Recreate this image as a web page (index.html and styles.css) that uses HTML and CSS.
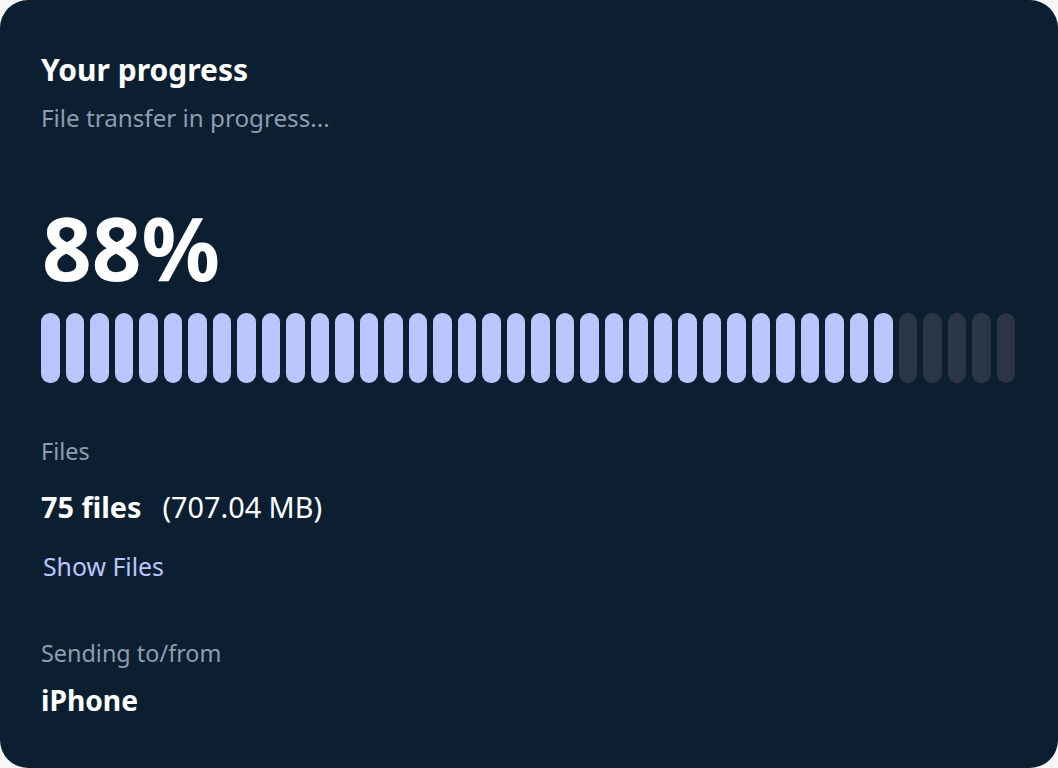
FILE: index.html
```html
<!DOCTYPE html>
<html lang="en">
<head>
    <meta charset="UTF-8">
    <meta name="viewport" content="width=device-width, initial-scale=1.0">
    <title>Your progress</title>
    <link rel="stylesheet" href="styles.css">
</head>
<body>
    <div class="card">
        <h1 class="title">Your progress</h1>
        <div class="subtitle">File transfer in progress...</div>

        <div class="percent">88%</div>
        <div class="bars" id="bars"></div>

        <div class="label files-label">Files</div>
        <div class="files-row">
            <span class="count">75 files</span>
            <span class="size">(707.04 MB)</span>
        </div>
        <a class="show-files" href="#">Show Files</a>

        <div class="label sending-label">Sending to/from</div>
        <div class="device">iPhone</div>
    </div>

    <script>
        const v_bars = document.getElementById("bars");
        const total = 40;
        const done = 35;

        for (let i = 0; i < total; i++) {
            const bar = document.createElement("div");
            bar.className = i < done ? "bar on" : "bar";
            v_bars.appendChild(bar);
        }
    </script>
</body>
</html>
```

FILE: styles.css
```css
html, body {
    margin: 0;
    height: 100%;
    background-color: #f7f7f8;
}

body {
    font-family: "Noto Sans", "Open Sans", sans-serif;
    color: #ffffff;
}

.card {
    box-sizing: border-box;
    height: 768px;
    background-color: #0c1f30;
    border-radius: 28px;
    padding: 54px 43px 0 41px;
    display: flex;
    flex-direction: column;
    align-items: flex-start;
}

.title {
    margin: 0;
    font-size: 30px;
    line-height: 32px;
    font-weight: 700;
}

.subtitle {
    margin-top: 17px;
    font-size: 24.2px;
    line-height: 30px;
    color: #8d9db1;
}

.percent {
    margin-top: 64px;
    margin-left: 1px;
    font-size: 87px;
    line-height: 100px;
    font-weight: 700;
}

.bars {
    margin-top: 16px;
    align-self: stretch;
    display: flex;
    gap: 6px;
}

.bar {
    flex: 1;
    height: 70px;
    border-radius: 9px;
    background-color: #2a3646;
}

.bar.on {
    background-color: #bac7ff;
}

.label {
    font-size: 23.4px;
    line-height: 28px;
    color: #8d9db1;
}

.files-label {
    margin-top: 54px;
}

.files-row {
    margin-top: 25px;
    display: flex;
    gap: 21px;
    font-size: 28.8px;
    line-height: 34px;
}

.count {
    font-weight: 700;
}

.show-files {
    margin-top: 27px;
    margin-left: 2px;
    font-size: 24.8px;
    line-height: 30px;
    color: #b9c5fd;
    text-decoration: none;
}

.sending-label {
    margin-top: 58px;
}

.device {
    margin-top: 17px;
    font-size: 28.2px;
    line-height: 32px;
    font-weight: 700;
}
```
